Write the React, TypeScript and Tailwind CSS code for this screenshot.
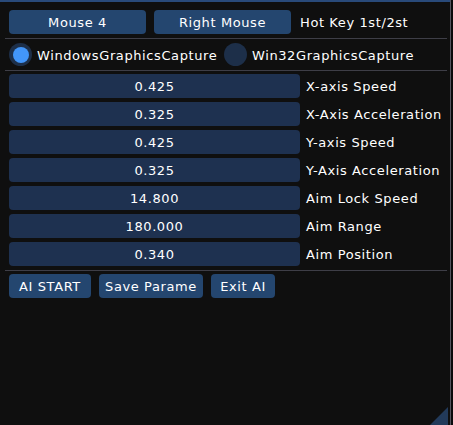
import React from "react";

const font = { fontFamily: '"DejaVu Sans", "Liberation Sans", sans-serif' };

function Btn({ w, children }: { w: string; children: React.ReactNode }) {
  return (
    <div className={`${w} h-[24px] shrink-0 rounded-[4px] bg-[#24466f] flex items-center justify-center pt-[2px] text-white`}>
      {children}
    </div>
  );
}

function Sep() {
  return <div className="h-px bg-[#3e3e47] -ml-[4px] w-[442px]" />;
}

function Radio({ on }: { on: boolean }) {
  return (
    <div className="w-[23px] h-[23px] shrink-0 rounded-full bg-[#1d2f49] flex items-center justify-center">
      {on && <div className="w-[16px] h-[16px] rounded-full bg-[#4296fa]" />}
    </div>
  );
}

const rows: [string, string][] = [
  ["0.425", "X-axis Speed"],
  ["0.325", "X-Axis Acceleration"],
  ["0.425", "Y-axis Speed"],
  ["0.325", "Y-Axis Acceleration"],
  ["14.800", "Aim Lock Speed"],
  ["180.000", "Aim Range"],
  ["0.340", "Aim Position"],
];

export default function App() {
  return (
    <div className="w-[453px] h-[425px] bg-[#0a0a0c] overflow-hidden text-[13px] tracking-[0.6px]" style={font}>
      <div className="relative w-[451px] h-[425px] bg-[#0f0f0f] border-r border-[#55555f]">
        <div className="h-[2px] bg-[#294a7a]" />
        <div className="w-[448px] overflow-hidden pl-[9px] flex flex-col">
          <div className="mt-[8px] flex items-center gap-[8px]">
            <Btn w="w-[137px]">Mouse 4</Btn>
            <Btn w="w-[137px]">Right Mouse</Btn>
            <span className="ml-[1px] pt-[2px] text-white whitespace-nowrap">Hot Key 1st/2st</span>
          </div>
          <div className="mt-[4px]"><Sep /></div>
          <div className="mt-[4px] flex items-center h-[23px]">
            <Radio on />
            <span className="ml-[5px] pt-[2px] w-[187px] text-white whitespace-nowrap">WindowsGraphicsCapture</span>
            <Radio on={false} />
            <span className="ml-[5px] pt-[2px] text-white whitespace-nowrap">Win32GraphicsCapture</span>
          </div>
          <div className="mt-[4px]"><Sep /></div>
          <div className="mt-[3px] flex flex-col gap-[4px]">
            {rows.map(([v, l], i) => (
              <div key={i} className="flex items-center h-[24px]">
                <div className="w-[291px] h-[24px] shrink-0 rounded-[4px] bg-[#1e3150] flex items-center justify-center pt-[2px] text-white">
                  {v}
                </div>
                <span className="ml-[6px] pt-[2px] text-white whitespace-nowrap">{l}</span>
              </div>
            ))}
          </div>
          <div className="mt-[4px]"><Sep /></div>
          <div className="mt-[3px] flex items-center gap-[8px]">
            <Btn w="w-[82px]">AI START</Btn>
            <Btn w="w-[104px]">Save Parame</Btn>
            <Btn w="w-[64px]">Exit AI</Btn>
          </div>
        </div>
        <svg className="absolute right-[2px] bottom-0" width="18" height="18" viewBox="0 0 18 18">
          <polygon points="18,0 18,18 0,18" fill="#223a5a" />
        </svg>
      </div>
    </div>
  );
}
